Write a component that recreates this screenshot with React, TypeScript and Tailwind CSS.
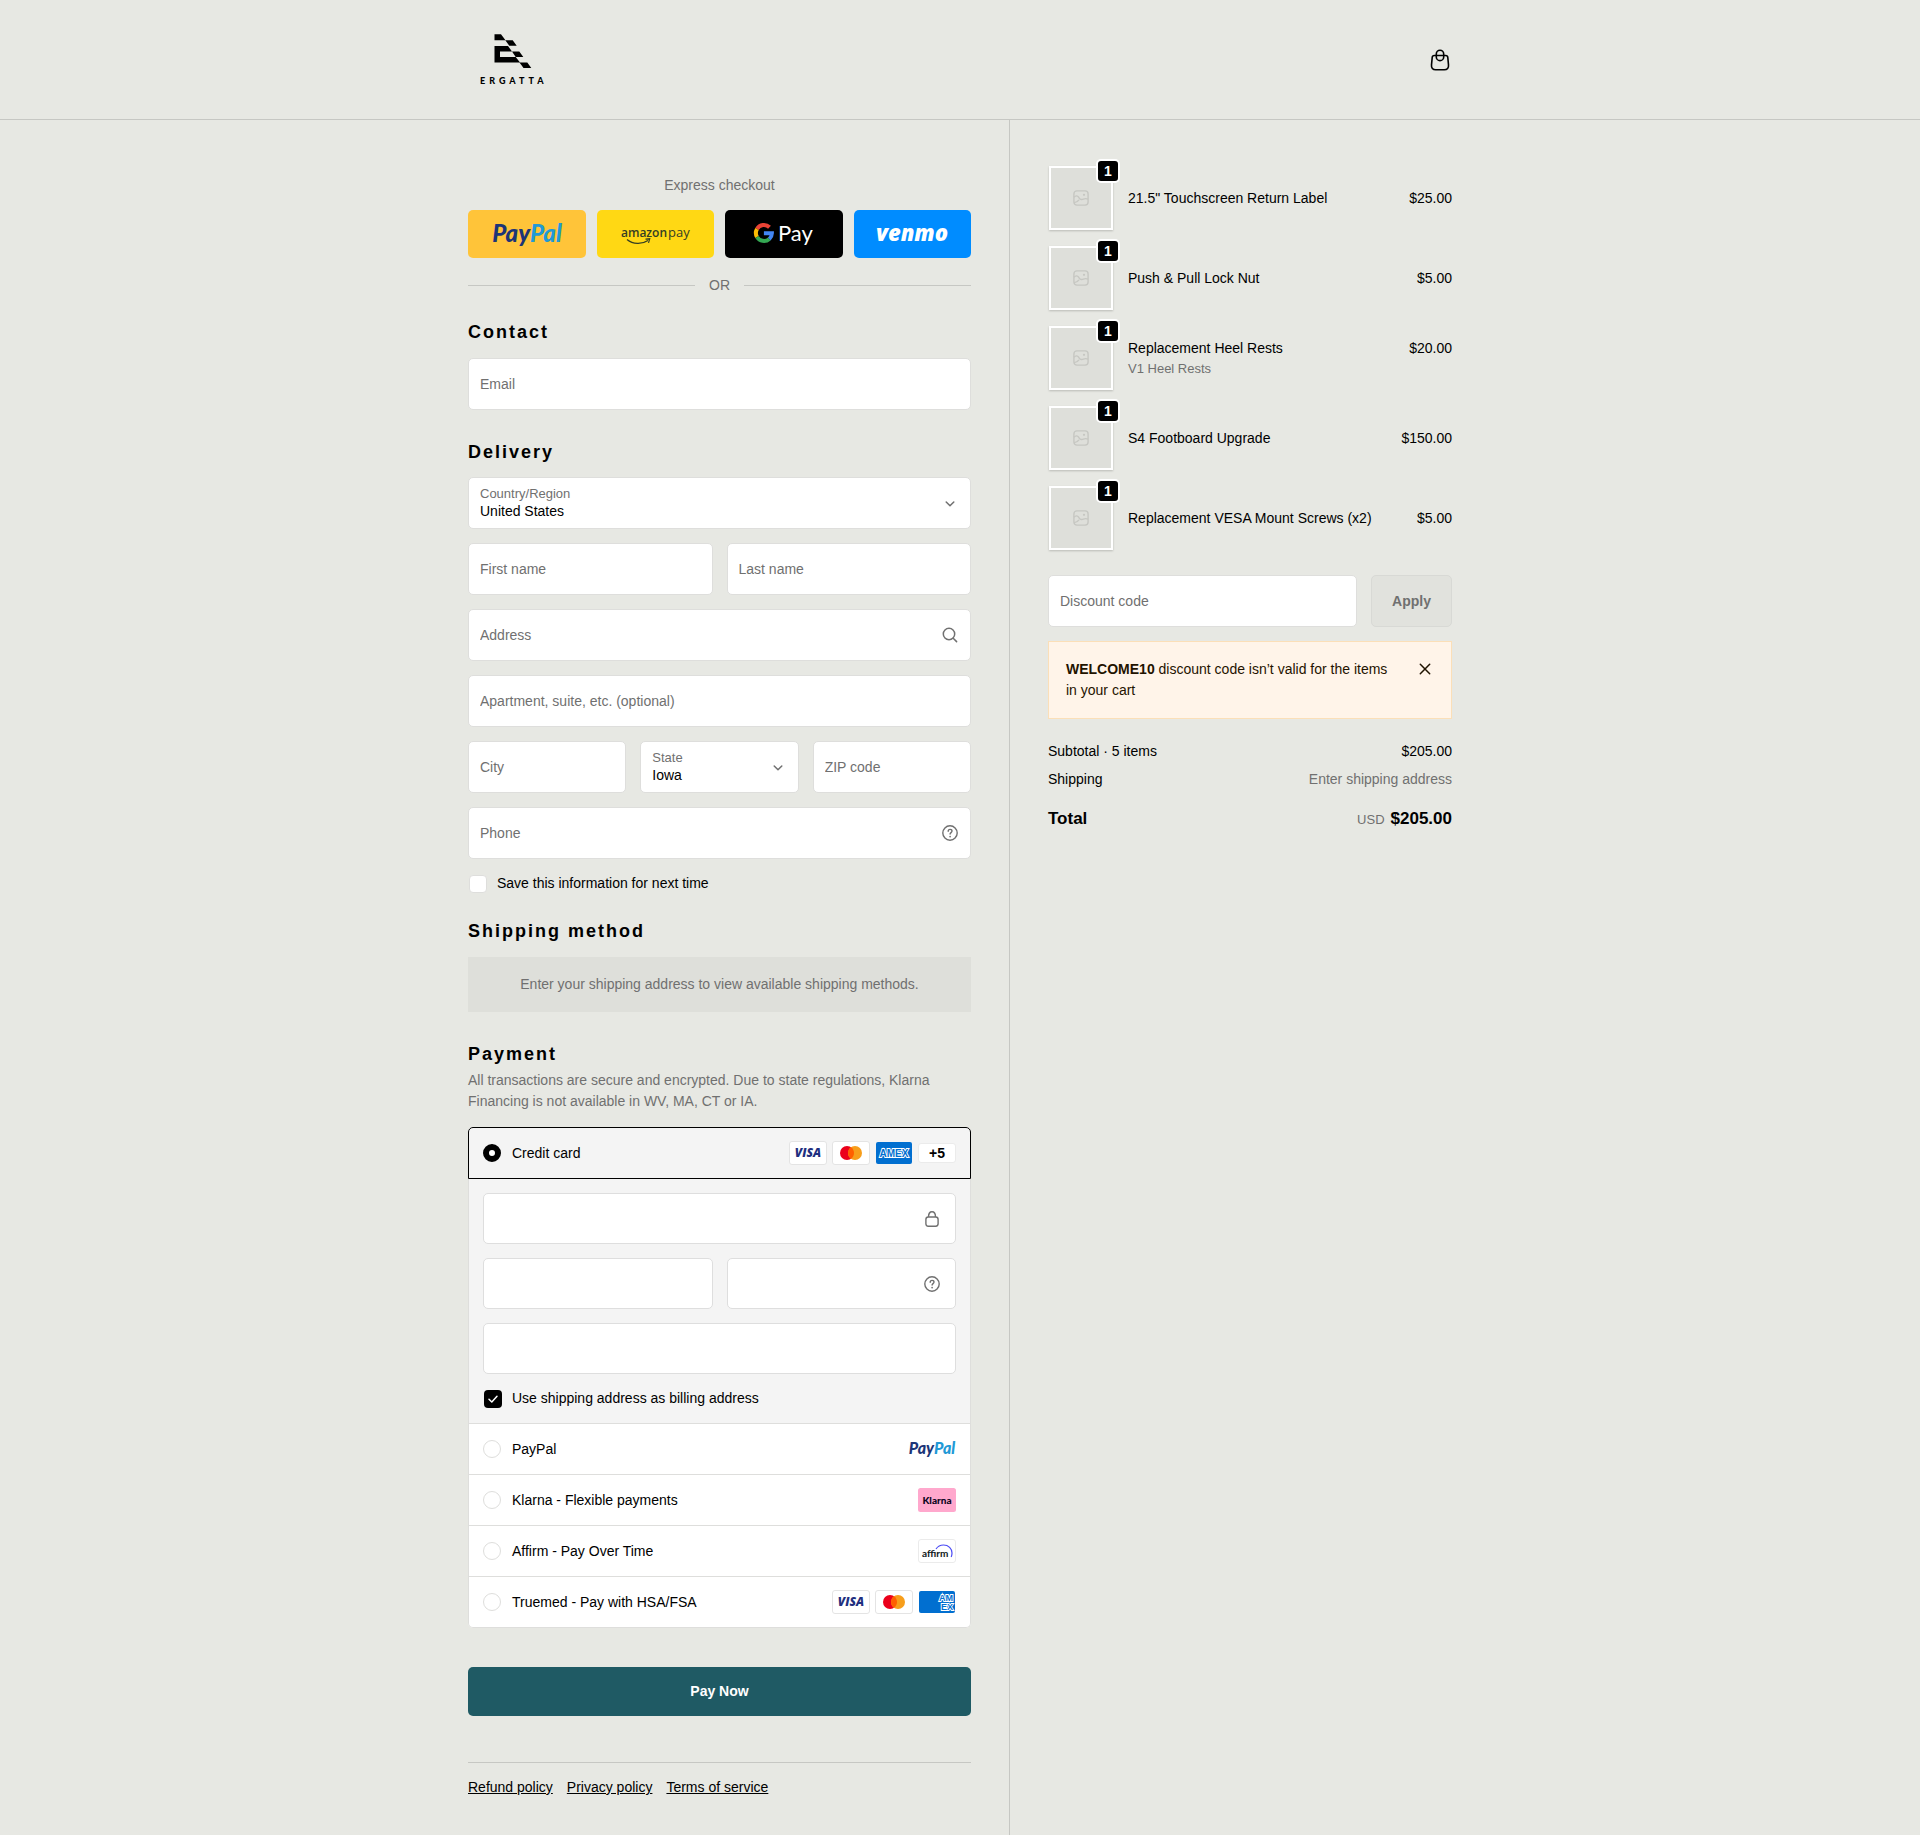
import { useState } from "react";
import type { ReactNode } from "react";

const items = [
  { name: '21.5" Touchscreen Return Label', price: "$25.00" },
  { name: "Push & Pull Lock Nut", price: "$5.00" },
  { name: "Replacement Heel Rests", variant: "V1 Heel Rests", price: "$20.00" },
  { name: "S4 Footboard Upgrade", price: "$150.00" },
  { name: "Replacement VESA Mount Screws (x2)", price: "$5.00" },
];

const fieldClass =
  "block h-[52px] w-full rounded-[5px] border border-[#dededc] bg-white px-[11px] text-sm text-black placeholder:text-[#707070] outline-none";

export default function App() {
  const [method, setMethod] = useState("card");

  return (
    <div className="flex min-h-screen flex-col bg-[#e7e8e3] font-['Liberation_Sans',Arial,sans-serif] text-sm leading-[21px] text-black">
      {/* Header */}
      <header className="border-b border-[#c6c7c3]">
        <div className="mx-auto flex h-[119px] max-w-[984px] items-center justify-between">
          <a href="#" aria-label="Ergatta">
            <ErgattaLogo />
          </a>
          <a href="#" aria-label="Cart" className="w-6">
            <CartIcon />
          </a>
        </div>
      </header>

      <div className="grid grow grid-cols-[1009fr_911fr]">
        {/* Checkout form */}
        <main className="flex justify-end pr-[38px]">
          <form className="w-full max-w-[503px] pt-[55px] pb-9" onSubmit={(e) => e.preventDefault()}>
            <section>
              <p className="mb-[14px] text-center text-[#707070]">Express checkout</p>
              <div className="grid grid-cols-4 gap-[11px]">
                <ExpressButton label="PayPal" className="bg-[#ffc439]">
                  <PayPalLogo className="h-8 w-[72px]" />
                </ExpressButton>
                <ExpressButton label="Amazon Pay" className="bg-[#ffd814]">
                  <AmazonPayLogo />
                </ExpressButton>
                <ExpressButton label="Google Pay" className="bg-black">
                  <GooglePayLogo />
                </ExpressButton>
                <ExpressButton label="Venmo" className="bg-[#008cff]">
                  <VenmoLogo />
                </ExpressButton>
              </div>
              <div className="mt-[17px] flex items-center gap-[14px] text-[#707070]">
                <span className="h-px grow bg-[#c6c7c3]" />
                OR
                <span className="h-px grow bg-[#c6c7c3]" />
              </div>
            </section>

            <section className="mt-6">
              <Heading>Contact</Heading>
              <input className={`mt-[14px] ${fieldClass}`} type="email" placeholder="Email" aria-label="Email" />
            </section>

            <section className="mt-[30px]">
              <Heading>Delivery</Heading>
              <div className="mt-[13px] grid gap-[14px]">
                <SelectField id="country" label="Country/Region" value="United States" />
                <div className="grid grid-cols-2 gap-[14px]">
                  <input className={fieldClass} placeholder="First name" aria-label="First name" />
                  <input className={fieldClass} placeholder="Last name" aria-label="Last name" />
                </div>
                <IconField label="Address" icon={<SearchIcon />} />
                <input
                  className={fieldClass}
                  placeholder="Apartment, suite, etc. (optional)"
                  aria-label="Apartment, suite, etc. (optional)"
                />
                <div className="grid grid-cols-3 gap-[14px]">
                  <input className={fieldClass} placeholder="City" aria-label="City" />
                  <SelectField id="state" label="State" value="Iowa" />
                  <input className={fieldClass} placeholder="ZIP code" aria-label="ZIP code" />
                </div>
                <IconField label="Phone" icon={<HelpIcon />} />
                <label className="flex items-center gap-[10px] pl-px">
                  <input
                    type="checkbox"
                    className="size-[18px] appearance-none rounded border border-[#dededc] bg-white"
                  />
                  Save this information for next time
                </label>
              </div>
            </section>

            <section className="mt-[25px]">
              <Heading>Shipping method</Heading>
              <p className="mt-[14px] bg-[#dedfda] py-[17px] text-center text-[#707070]">
                Enter your shipping address to view available shipping methods.
              </p>
            </section>

            <section className="mt-[30px]">
              <Heading>Payment</Heading>
              <p className="mt-1 text-[#707070]">
                All transactions are secure and encrypted. Due to state regulations, Klarna Financing is not available in
                WV, MA, CT or IA.
              </p>

              <div className="mt-[15px] rounded-[5px] bg-white">
                <label className="flex h-[52px] items-center rounded-t-[5px] border border-black bg-[#f4f4f4] px-[14px]">
                  <Radio checked={method === "card"} onChange={() => setMethod("card")} />
                  <span className="ml-[11px] grow">Credit card</span>
                  <span className="flex items-center gap-[5px]">
                    <VisaCard />
                    <MastercardCard />
                    <AmexCard />
                    <span className="flex h-5 w-[38px] items-center justify-center rounded-[3px] border border-[#ebebeb] bg-white text-sm font-bold">
                      +5
                    </span>
                  </span>
                </label>

                <div className="grid gap-[14px] border-x border-[#dededc] bg-[#f4f4f4] p-[14px]">
                  <CardField label="Card number" icon={<LockIcon />} />
                  <div className="grid grid-cols-2 gap-[14px]">
                    <CardField label="Expiration date" />
                    <CardField label="Security code" icon={<HelpIcon />} />
                  </div>
                  <CardField label="Name on card" />
                  <label className="flex items-center gap-[10px] pl-px">
                    <span className="relative flex">
                      <input
                        type="checkbox"
                        defaultChecked
                        className="size-[18px] appearance-none rounded bg-white checked:bg-black"
                      />
                      <svg
                        viewBox="0 0 18 18"
                        className="pointer-events-none absolute inset-0 size-[18px] fill-none stroke-white stroke-[1.5]"
                      >
                        <path d="M5 9.3 7.8 12 13 6.3" strokeLinecap="round" strokeLinejoin="round" />
                      </svg>
                    </span>
                    Use shipping address as billing address
                  </label>
                </div>

                <div className="rounded-b-[5px] border border-t-0 border-[#dededc]">
                  <PaymentRow label="PayPal" checked={method === "paypal"} onChange={() => setMethod("paypal")}>
                    <PayPalLogo className="h-[22px] w-12" />
                  </PaymentRow>
                  <PaymentRow
                    label="Klarna - Flexible payments"
                    checked={method === "klarna"}
                    onChange={() => setMethod("klarna")}
                  >
                    <KlarnaCard />
                  </PaymentRow>
                  <PaymentRow
                    label="Affirm - Pay Over Time"
                    checked={method === "affirm"}
                    onChange={() => setMethod("affirm")}
                  >
                    <AffirmCard />
                  </PaymentRow>
                  <PaymentRow
                    label="Truemed - Pay with HSA/FSA"
                    checked={method === "truemed"}
                    onChange={() => setMethod("truemed")}
                  >
                    <VisaCard />
                    <MastercardCard />
                    <AmexStackedCard />
                  </PaymentRow>
                </div>
              </div>
            </section>

            <button className="mt-[39px] h-[49px] w-full rounded-[5px] bg-[#1f5a64] font-bold text-white">
              Pay Now
            </button>

            <footer className="mt-[46px] flex gap-[14px] border-t border-[#c6c7c3] pt-[14px]">
              <a href="#" className="underline">
                Refund policy
              </a>
              <a href="#" className="underline">
                Privacy policy
              </a>
              <a href="#" className="underline">
                Terms of service
              </a>
            </footer>
          </form>
        </main>

        {/* Order summary */}
        <aside className="border-l border-[#c6c7c3] pt-[45px] pl-[38px]">
          <div className="max-w-[404px]">
            <ul className="grid gap-[14px]">
              {items.map((item) => (
                <li key={item.name} className="flex h-[66px] items-center">
                  <div className="relative m-px flex size-16 items-center justify-center border-2 border-white bg-[#dedfda] shadow-[0_1px_2px_rgba(0,0,0,0.2)]">
                    <ImageIcon />
                    <span className="absolute -top-[9px] -right-[9px] flex size-6 items-center justify-center rounded-[5px] border-2 border-white bg-black font-bold text-white">
                      1
                    </span>
                  </div>
                  <div className="ml-[14px] flex grow justify-between">
                    <div>
                      <p>{item.name}</p>
                      {item.variant && <p className="text-[13px] leading-5 text-[#707070]">{item.variant}</p>}
                    </div>
                    <p>{item.price}</p>
                  </div>
                </li>
              ))}
            </ul>

            <div className="mt-6 flex gap-[14px]">
              <input className={fieldClass} placeholder="Discount code" aria-label="Discount code" />
              <button className="h-[52px] w-[81px] shrink-0 rounded-[5px] border border-[#d8d9d5] bg-[#e1e2dd] font-bold text-[#707070]">
                Apply
              </button>
            </div>

            <div className="mt-[14px] flex items-start justify-between border border-[#fbdfb8] bg-[#fff4e9] px-[17px] py-[17px]">
              <p className="max-w-[330px] text-[#1f1300]">
                <strong>WELCOME10</strong> discount code isn’t valid for the items in your cart
              </p>
              <button aria-label="Dismiss" className="flex h-5 w-[18px] items-center justify-center">
                <svg viewBox="0 0 12 12" className="size-3 stroke-[#1f1300] stroke-[1.5]">
                  <path d="M1.3 1.3l9.4 9.4M10.7 1.3 1.3 10.700" strokeLinecap="round" />
                </svg>
              </button>
            </div>

            <div className="mt-[22px] grid gap-[7px]">
              <div className="flex justify-between">
                <span>Subtotal · 5 items</span>
                <span>$205.00</span>
              </div>
              <div className="flex justify-between">
                <span>Shipping</span>
                <span className="text-[#707070]">Enter shipping address</span>
              </div>
            </div>
            <div className="mt-[17px] flex items-baseline justify-between text-[17px] leading-6 font-bold">
              <span>Total</span>
              <span>
                <span className="mr-[6px] text-[13px] font-normal text-[#707070]">USD</span>
                $205.00
              </span>
            </div>
          </div>
        </aside>
      </div>
    </div>
  );
}

function Heading({ children }: { children: ReactNode }) {
  return <h2 className="text-lg leading-6 font-bold tracking-[2px]">{children}</h2>;
}

function SelectField({ id, label, value }: { id: string; label: string; value: string }) {
  return (
    <div className="relative">
      <label htmlFor={id} className="absolute top-2 left-3 text-[13px] leading-[18px] text-[#707070]">
        {label}
      </label>
      <select
        id={id}
        className="block h-[52px] w-full appearance-none rounded-[5px] border border-[#dededc] bg-white px-[11px] pt-4 text-sm outline-none"
      >
        <option>{value}</option>
      </select>
      <svg
        viewBox="0 0 10 10"
        className="pointer-events-none absolute top-[22px] right-4 size-[10px] fill-none stroke-[#707070] stroke-[1.5]"
      >
        <path d="M1.2 3 5 6.8 8.8 3" strokeLinecap="round" strokeLinejoin="round" />
      </svg>
    </div>
  );
}

function IconField({ label, icon }: { label: string; icon: ReactNode }) {
  return (
    <div className="relative">
      <input className={fieldClass} placeholder={label} aria-label={label} />
      <span className="absolute inset-y-0 right-[13px] flex items-center">{icon}</span>
    </div>
  );
}

function CardField({ label, icon }: { label: string; icon?: ReactNode }) {
  return (
    <div className="relative">
      <input
        className="block h-[51px] w-full rounded-[5px] border border-[#dedede] bg-white px-[11px] text-sm outline-none"
        aria-label={label}
      />
      {icon && <span className="absolute inset-y-0 right-4 flex items-center">{icon}</span>}
    </div>
  );
}

function Radio({ checked, onChange }: { checked: boolean; onChange: () => void }) {
  return (
    <input
      type="radio"
      name="payment"
      checked={checked}
      onChange={onChange}
      className="size-[18px] appearance-none rounded-full border border-[#dededc] bg-white checked:border-[6px] checked:border-black"
    />
  );
}

function PaymentRow({
  label,
  checked,
  onChange,
  children,
}: {
  label: string;
  checked: boolean;
  onChange: () => void;
  children: ReactNode;
}) {
  return (
    <label className="flex h-[51px] items-center border-t border-[#dededc] px-[14px]">
      <Radio checked={checked} onChange={onChange} />
      <span className="ml-[11px] grow">{label}</span>
      <span className="flex items-center gap-[5px]">{children}</span>
    </label>
  );
}

function ExpressButton({ label, className, children }: { label: string; className: string; children: ReactNode }) {
  return (
    <button aria-label={label} className={`flex h-12 items-center justify-center rounded-[5px] ${className}`}>
      {children}
    </button>
  );
}

/* Icons */

function CartIcon() {
  return (
    <svg viewBox="0 0 24 24" className="size-6 fill-none stroke-black stroke-[1.6]">
      <path d="M6.3 7.5h11.400c1.600 0 2 .7 2.100 2l.7 7.300c.3 3-1.200 5-4.200 5H7.700c-3 0-4.500-2-4.200-5l.7-7.300c.1-1.300.5-2 2.100-2Z" />
      <rect x="8.300" y="2.200" width="7.400" height="10.400" rx="3.700" />
    </svg>
  );
}

function SearchIcon() {
  return (
    <svg viewBox="0 0 16 16" className="size-4 fill-none stroke-[#707070] stroke-[1.5]">
      <circle cx="7" cy="7" r="5.700" />
      <path d="m11.200 11.200 3.400 3.400" strokeLinecap="round" />
    </svg>
  );
}

function HelpIcon() {
  return (
    <svg viewBox="0 0 16 16" className="size-4 fill-none stroke-[#707070] stroke-[1.4]">
      <circle cx="8" cy="8" r="7.200" />
      <path d="M6.200 6.200c0-1.100.8-1.800 1.900-1.800s1.900.7 1.900 1.700c0 1.500-1.900 1.500-1.900 3" strokeLinecap="round" />
      <circle cx="8.100" cy="11.600" r=".85" className="fill-[#707070] stroke-none" />
    </svg>
  );
}

function LockIcon() {
  return (
    <svg viewBox="0 0 16 16" className="size-4 fill-none stroke-[#707070] stroke-[1.4]">
      <rect x="1.900" y="6" width="12.200" height="9.200" rx="2.400" />
      <path d="M4.500 6c0-3 1.200-5.200 3.500-5.200s3.500 2.200 3.500 5.200" />
    </svg>
  );
}

function ImageIcon() {
  return (
    <svg viewBox="0 0 16 16" className="size-4 fill-none stroke-[#c6c7c2] stroke-[1.4]">
      <rect x=".9" y=".9" width="14.200" height="14.200" rx="3" />
      <path d="M1 7.200c1.800-2 3.600-1.600 4.600 0 .9 1.500 1.500 2.600 3.200 2.300 1.900-.3 3.500-1.800 6.200-.3" />
      <path d="M1.200 12.600c2.200-.2 3.600-1.200 4.800-2.800" />
      <circle cx="11" cy="4.800" r="1.100" className="fill-[#c6c7c2] stroke-none" />
    </svg>
  );
}

/* Logos */

function ErgattaLogo() {
  return (
    <svg viewBox="0 0 91 67" className="h-[67px] w-[91px]">
      <path d="M26.500 8.300H33l4.500 6h-11ZM37.300 14.300h7.400l4 5.400h-7.400Z" />
      <path d="M26.500 20H40l4 5.500H32V31h15.700l4.300 5.500H26.500ZM44 25.500h7.300l4 5.500h-7.600ZM51.500 36.500h7.800l4 5.500h-7.800Z" />
      <text
        x="12"
        y="58"
        letterSpacing="4"
        className="font-['Lato','Liberation_Sans',sans-serif] text-[9px] font-black"
      >
        ERGATTA
      </text>
    </svg>
  );
}

function PayPalLogo({ className }: { className: string }) {
  return (
    <svg viewBox="0 0 72 32" className={className}>
      <text
        x="36"
        y="24"
        textAnchor="middle"
        className="font-['Lato','Liberation_Sans',sans-serif] text-[24px] font-black italic"
      >
        <tspan fill="#1c3577">Pay</tspan>
        <tspan fill="#2199d6">Pal</tspan>
      </text>
    </svg>
  );
}

function AmazonPayLogo() {
  return (
    <svg viewBox="0 0 72 28" className="h-7 w-[72px] fill-[#333e24]">
      <text x="2" y="17" className="font-['Open_Sans',sans-serif] text-[12px] font-semibold">
        amazon
      </text>
      <text x="49" y="17" className="font-['Open_Sans',sans-serif] text-[13px]">
        pay
      </text>
      <path d="M8 19.500c6 5 15 5 21 1" fill="none" stroke="#333e24" strokeWidth="1.300" />
      <path d="M26.500 19.200l4.200-.4-1.200 4" fill="none" stroke="#333e24" strokeWidth="1.200" />
    </svg>
  );
}

function GooglePayLogo() {
  return (
    <svg viewBox="0 0 62 28" className="h-7 w-[62px]">
      <g fill="none" strokeWidth="4">
        <path d="M16.500 7.200A8 8 0 0 0 4 8.900" stroke="#ea4335" />
        <path d="M4 8.900a8 8 0 0 0 0 8" stroke="#fbbc04" />
        <path d="M4 16.900a8 8 0 0 0 12.300 2" stroke="#34a853" />
        <path d="M16.300 18.900a8 8 0 0 0 2.600-5.700h-8" stroke="#4285f4" />
      </g>
      <text x="25" y="21" className="fill-white font-['Lato',sans-serif] text-[22px]">
        Pay
      </text>
    </svg>
  );
}

function VenmoLogo() {
  return (
    <svg viewBox="0 0 76 32" className="h-8 w-[76px]">
      <text
        x="38"
        y="23"
        textAnchor="middle"
        className="fill-white font-['Open_Sans',sans-serif] text-[22px] font-extrabold italic"
      >
        venmo
      </text>
    </svg>
  );
}

function VisaCard() {
  return (
    <svg viewBox="0 0 38 24" className="h-6 w-[38px]" role="img" aria-label="Visa">
      <rect x=".5" y=".5" width="37" height="23" rx="2.500" fill="#fff" stroke="#e4e4e4" />
      <text
        x="19"
        y="16.300"
        textAnchor="middle"
        fill="#1f2f7f"
        className="font-['Open_Sans',sans-serif] text-[12px] font-extrabold italic"
      >
        VISA
      </text>
    </svg>
  );
}

function MastercardCard() {
  return (
    <svg viewBox="0 0 38 24" className="h-6 w-[38px]" role="img" aria-label="Mastercard">
      <rect x=".5" y=".5" width="37" height="23" rx="2.500" fill="#fff" stroke="#e4e4e4" />
      <circle cx="15" cy="12" r="7" fill="#eb001b" />
      <circle cx="23" cy="12" r="7" fill="#f79e1b" />
      <path d="M22 12c0-2.400-1.200-4.500-3-5.700a7 7 0 0 0 0 11.400c1.800-1.200 3-3.300 3-5.700Z" fill="#ff5f00" />
    </svg>
  );
}

function AmexCard() {
  return (
    <svg viewBox="0 0 38 24" className="h-6 w-[38px]" role="img" aria-label="American Express">
      <rect x="1" y="1" width="36" height="22" rx="2" fill="#016fd0" />
      <text
        x="19"
        y="15.500"
        textAnchor="middle"
        fill="#016fd0"
        stroke="#fff"
        strokeWidth="1.800"
        paintOrder="stroke"
        className="font-['Liberation_Sans',sans-serif] text-[10px] font-bold"
      >
        AMEX
      </text>
    </svg>
  );
}

function AmexStackedCard() {
  return (
    <svg viewBox="0 0 38 24" className="h-6 w-[38px]" role="img" aria-label="American Express">
      <rect x="1" y="1" width="36" height="22" rx="2" fill="#016fd0" />
      <g
        fill="#016fd0"
        stroke="#fff"
        strokeWidth="1.800"
        paintOrder="stroke"
        className="font-['Liberation_Sans',sans-serif] text-[9px] font-bold"
      >
        <text x="21" y="11">
          AM
        </text>
        <text x="23" y="20">
          EX
        </text>
      </g>
    </svg>
  );
}

function KlarnaCard() {
  return (
    <svg viewBox="0 0 38 24" className="h-6 w-[38px]" role="img" aria-label="Klarna">
      <rect width="38" height="24" rx="2.500" fill="#ffa8cd" />
      <text
        x="19"
        y="16"
        textAnchor="middle"
        fill="#0b051d"
        className="font-['Lato',sans-serif] text-[10px] font-black"
      >
        Klarna
      </text>
    </svg>
  );
}

function AffirmCard() {
  return (
    <svg viewBox="0 0 38 24" className="h-6 w-[38px]" role="img" aria-label="Affirm">
      <rect x=".5" y=".5" width="37" height="23" rx="2.500" fill="#fff" stroke="#ebebeb" />
      <path
        d="M18 10c2-3 4.500-4 7.500-4 5 0 8.500 3.500 8.500 8 0 1.500-.3 3-.8 4"
        fill="none"
        stroke="#4a4af4"
        strokeWidth="1.200"
      />
      <text x="4" y="18" fill="#101820" className="font-['Lato',sans-serif] text-[10px] font-bold">
        affirm
      </text>
    </svg>
  );
}
